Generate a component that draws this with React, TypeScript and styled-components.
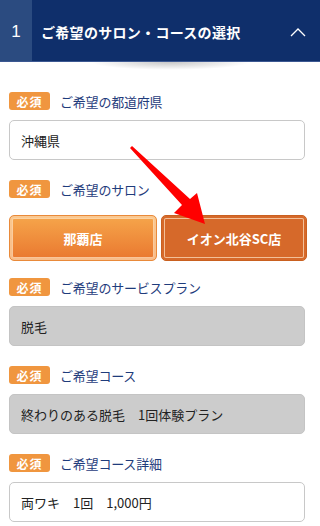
import React from 'react';
import styled, { createGlobalStyle } from 'styled-components';

const GlobalStyle = createGlobalStyle`
  html, body {
    margin: 0;
    padding: 0;
    background: #ffffff;
  }
  body {
    font-family: "Noto Sans CJK JP", "Noto Sans", sans-serif;
  }
  * {
    box-sizing: border-box;
  }
`;

const Page = styled.div`
  position: relative;
  width: 320px;
  height: 526px;
  overflow: hidden;
  background: #fff;
`;

const Header = styled.div`
  position: relative;
  display: flex;
  height: 62px;
  background: #0f2f6b;
  border-bottom: 1px solid #3c5892;

  &::after {
    content: '';
    position: absolute;
    left: 90px;
    right: 70px;
    top: 62px;
    height: 8px;
    background: radial-gradient(ellipse at 50% 0%, rgba(0, 0, 0, 0.22) 0%, rgba(0, 0, 0, 0) 70%);
  }
`;

const StepNumber = styled.div`
  width: 32px;
  display: flex;
  align-items: center;
  justify-content: center;
  background: #2b4b80;
  color: #fff;
  font-family: "Liberation Sans", sans-serif;
  font-size: 17px;
  padding-top: 2px;
`;

const Title = styled.div`
  flex: 1;
  display: flex;
  align-items: center;
  padding-left: 9px;
  padding-top: 2px;
  color: #fff;
  font-size: 14px;
  font-weight: 700;
  letter-spacing: 0.3px;
`;

const Chevron = styled.div`
  width: 40px;
  display: flex;
  align-items: center;
  justify-content: center;
  padding-top: 2px;
  padding-right: 4px;
`;

const Body = styled.div`
  padding: 30px 15px 0 9px;
`;

const Field = styled.div<{ $gap?: number; $after?: number }>`
  display: flex;
  flex-direction: column;
  gap: ${p => p.$gap ?? 10}px;
  margin-bottom: ${p => p.$after ?? 20}px;
`;

const LabelRow = styled.div`
  display: flex;
  align-items: center;
  gap: 10px;
  height: 18px;
`;

const Badge = styled.span`
  display: inline-flex;
  align-items: center;
  justify-content: center;
  width: 41px;
  height: 18px;
  border-radius: 3px;
  background: #f0963f;
  color: #fff;
  font-size: 12px;
  font-weight: 700;
  letter-spacing: 1px;
`;

const LabelText = styled.span`
  color: #1f3c7c;
  font-size: 13px;
  letter-spacing: -0.2px;
`;

const Box = styled.div<{ $disabled?: boolean }>`
  display: flex;
  align-items: center;
  height: 40px;
  padding: 0 11px;
  border: 1px solid ${p => (p.$disabled ? '#c4c4c4' : '#c8c8c8')};
  border-radius: 5px;
  background: ${p => (p.$disabled ? '#cccccc' : '#ffffff')};
  color: #222;
  font-size: 13px;
  white-space: pre;
`;

const ButtonRow = styled.div`
  display: grid;
  grid-template-columns: 148px 146px;
  gap: 4px;
`;

const SalonButton = styled.button<{ $active?: boolean }>`
  height: 46px;
  border: 1px solid ${p => (p.$active ? '#c9601f' : '#e98a3a')};
  border-radius: 5px;
  background: ${p =>
    p.$active ? '#d6692a' : 'linear-gradient(to bottom, #f6a64b 0%, #e9772f 100%)'};
  box-shadow: inset 0 0 0 2px ${p => (p.$active ? '#d6692a' : 'rgba(246, 160, 75, 0.2)')},
    inset 0 0 0 3px rgba(255, 230, 200, 0.7);
  color: #fff;
  font-family: "Noto Sans CJK JP", sans-serif;
  font-size: 13px;
  font-weight: 700;
  padding: 0;
`;

const ArrowLayer = styled.svg`
  position: absolute;
  left: 0;
  top: 0;
  pointer-events: none;
`;

const fields = [
  { label: 'ご希望のサービスプラン', value: '脱毛', disabled: true },
  { label: 'ご希望コース', value: '終わりのある脱毛　1回体験プラン', disabled: true },
  { label: 'ご希望コース詳細', value: '両ワキ　1回　1,000円', disabled: false },
];

const App: React.FC = () => {
  return (
    <Page>
      <GlobalStyle />
      <Header>
        <StepNumber>1</StepNumber>
        <Title>ご希望のサロン・コースの選択</Title>
        <Chevron>
          <svg width="16" height="10" viewBox="0 0 16 10">
            <polyline points="1,9 8,2 15,9" fill="none" stroke="#fff" strokeWidth="1.3" />
          </svg>
        </Chevron>
      </Header>

      <Body>
        <Field>
          <LabelRow>
            <Badge>必須</Badge>
            <LabelText>ご希望の都道府県</LabelText>
          </LabelRow>
          <Box>沖縄県</Box>
        </Field>

        <Field $gap={17} $after={17}>
          <LabelRow>
            <Badge>必須</Badge>
            <LabelText>ご希望のサロン</LabelText>
          </LabelRow>
          <ButtonRow>
            <SalonButton>那覇店</SalonButton>
            <SalonButton $active>イオン北谷SC店</SalonButton>
          </ButtonRow>
        </Field>

        {fields.map(f => (
          <Field key={f.label}>
            <LabelRow>
              <Badge>必須</Badge>
              <LabelText>{f.label}</LabelText>
            </LabelRow>
            <Box $disabled={f.disabled}>{f.value}</Box>
          </Field>
        ))}
      </Body>

      <ArrowLayer width="320" height="526" viewBox="0 0 320 526">
        <polygon
          points="130,148 132,146 190,199 197,193 205,224 174,213 182,205"
          fill="#ff0000"
        />
      </ArrowLayer>
    </Page>
  );
};

export default App;
